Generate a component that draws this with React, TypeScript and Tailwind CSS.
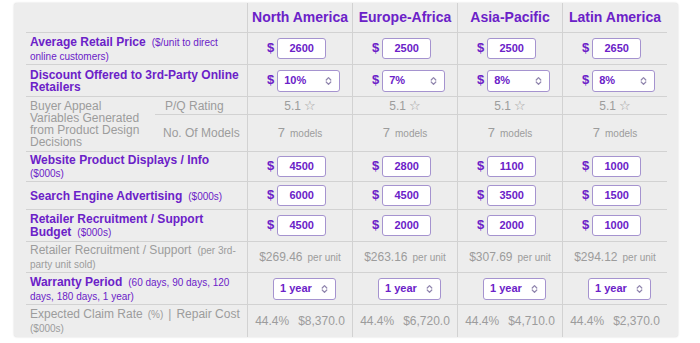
import React from "react";

const PURPLE = "text-[#6b21c8]";
const GRAY = "text-[#9c9c9c]";

type Col = {
  name: string;
  price: string;
  disc: string;
  web: string;
  search: string;
  budget: string;
  per: string;
  claim: string;
  cost: string;
};

const cols: Col[] = [
  { name: "North America", price: "2600", disc: "10%", web: "4500", search: "6000", budget: "4500", per: "$269.46", claim: "44.4%", cost: "$8,370.0" },
  { name: "Europe-Africa", price: "2500", disc: "7%", web: "2800", search: "4500", budget: "2000", per: "$263.16", claim: "44.4%", cost: "$6,720.0" },
  { name: "Asia-Pacific", price: "2500", disc: "8%", web: "1100", search: "3500", budget: "2000", per: "$307.69", claim: "44.4%", cost: "$4,710.0" },
  { name: "Latin America", price: "2650", disc: "8%", web: "1000", search: "1500", budget: "1000", per: "$294.12", claim: "44.4%", cost: "$2,370.0" },
];

function Chevrons() {
  return (
    <svg width="7" height="10" viewBox="0 0 7 10" fill="none">
      <path d="M1.2 4 L3.5 1.6 L5.8 4" stroke="#8f84ad" strokeWidth="1.2" strokeLinecap="round" strokeLinejoin="round" />
      <path d="M1.2 6 L3.5 8.4 L5.8 6" stroke="#8f84ad" strokeWidth="1.2" strokeLinecap="round" strokeLinejoin="round" />
    </svg>
  );
}

function Dollar() {
  return <span className={`text-[13px] font-bold leading-none mb-[2px] ${PURPLE}`}>$</span>;
}

function InputBox({ v }: { v: string }) {
  return (
    <div className={`w-[49px] h-[21px] border border-[#a593cf] rounded-[3px] bg-white flex items-center justify-center text-[11px] font-bold ${PURPLE}`}>
      {v}
    </div>
  );
}

function SelectBox({ v }: { v: string }) {
  return (
    <div className={`w-[63px] h-[22px] border border-[#a593cf] rounded-[3px] bg-white flex items-center justify-between pl-[6px] pr-[7px] text-[11px] font-bold ${PURPLE}`}>
      <span>{v}</span>
      <Chevrons />
    </div>
  );
}

const dataCell = "border-l border-b border-[#d2d2d2]";
const labelCell = "col-span-2 border-b border-[#d2d2d2] flex items-center pl-[4px] leading-[12px]";

function Small({ children, className = "" }: { children: React.ReactNode; className?: string }) {
  return <span className={`text-[10px] font-normal ${className}`}>{children}</span>;
}

export default function App() {
  return (
    <div className="w-[700px] h-[343px] bg-white pl-[14px] pt-[3px]" style={{ fontFamily: '"Liberation Sans", Arial, sans-serif' }}>
      <div className="w-[664px] h-[334px] bg-[#ededed] rounded-[3px] shadow-[0_0_2px_rgba(0,0,0,0.18)] pl-[12px] pr-[11px]">
        <div className="grid grid-cols-[129px_92px_105px_105px_105px_105px] grid-rows-[30px_32px_32px_18px_37px_30px_28px_32px_31px_32px_32px]">
          {/* header */}
          <div className="col-span-2 border-b border-[#d2d2d2]" />
          {cols.map((c) => (
            <div key={c.name} className={`${dataCell} flex items-center justify-center text-[14px] font-bold ${PURPLE}`}>
              {c.name}
            </div>
          ))}

          {/* average retail price */}
          <div className={`${labelCell} ${PURPLE}`}>
            <div>
              <span className="text-[12px] font-bold">Average Retail Price</span>
              <Small className="ml-[6px]">($/unit to direct</Small>
              <br />
              <Small>online customers)</Small>
            </div>
          </div>
          {cols.map((c) => (
            <div key={c.name} className={`${dataCell} flex items-center pl-[19px] gap-[3px]`}>
              <Dollar />
              <InputBox v={c.price} />
            </div>
          ))}

          {/* discount */}
          <div className={`${labelCell} ${PURPLE}`}>
            <div className="text-[12px] font-bold">
              Discount Offered to 3rd-Party Online
              <br />
              Retailers
            </div>
          </div>
          {cols.map((c) => (
            <div key={c.name} className={`${dataCell} flex items-center pl-[19px] gap-[3px]`}>
              <Dollar />
              <SelectBox v={c.disc} />
            </div>
          ))}

          {/* buyer appeal */}
          <div className={`row-span-2 border-b border-[#d2d2d2] flex items-center pl-[4px] text-[12px] leading-[12px] ${GRAY}`}>
            <div>
              Buyer Appeal
              <br />
              Variables Generated
              <br />
              from Product Design
              <br />
              Decisions
            </div>
          </div>
          <div className={`border-b border-[#d2d2d2] flex items-center pl-[10px] text-[12px] ${GRAY}`}>P/Q Rating</div>
          {cols.map((c) => (
            <div key={c.name} className={`${dataCell} flex items-center justify-center text-[12px] ${GRAY}`}>
              <span>5.1</span>
              <span className="ml-[3px] text-[13px] leading-none" style={{ fontFamily: '"DejaVu Sans", sans-serif' }}>☆</span>
            </div>
          ))}
          <div className={`border-b border-[#d2d2d2] flex items-center pl-[8px] text-[12px] ${GRAY}`}>No. Of Models</div>
          {cols.map((c) => (
            <div key={c.name} className={`${dataCell} flex items-center justify-center ${GRAY}`}>
              <span className="text-[13px]">7</span>
              <span className="text-[10px] ml-[5px]">models</span>
            </div>
          ))}

          {/* website */}
          <div className={`${labelCell} ${PURPLE}`}>
            <div>
              <span className="text-[12px] font-bold">Website Product Displays / Info</span>
              <br />
              <Small>($000s)</Small>
            </div>
          </div>
          {cols.map((c) => (
            <div key={c.name} className={`${dataCell} flex items-center pl-[19px] gap-[3px]`}>
              <Dollar />
              <InputBox v={c.web} />
            </div>
          ))}

          {/* search */}
          <div className={`${labelCell} ${PURPLE}`}>
            <div>
              <span className="text-[12px] font-bold">Search Engine Advertising</span>
              <Small className="ml-[6px]">($000s)</Small>
            </div>
          </div>
          {cols.map((c) => (
            <div key={c.name} className={`${dataCell} flex items-center pl-[19px] gap-[3px]`}>
              <Dollar />
              <InputBox v={c.search} />
            </div>
          ))}

          {/* retailer budget */}
          <div className={`${labelCell} ${PURPLE}`}>
            <div>
              <span className="text-[12px] font-bold">Retailer Recruitment / Support</span>
              <br />
              <span className="text-[12px] font-bold">Budget</span>
              <Small className="ml-[6px]">($000s)</Small>
            </div>
          </div>
          {cols.map((c) => (
            <div key={c.name} className={`${dataCell} flex items-center pl-[19px] gap-[3px]`}>
              <Dollar />
              <InputBox v={c.budget} />
            </div>
          ))}

          {/* retailer per unit */}
          <div className={`${labelCell} ${GRAY}`}>
            <div>
              <span className="text-[12px]">Retailer Recruitment / Support</span>
              <Small className="ml-[6px]">(per 3rd-</Small>
              <br />
              <Small>party unit sold)</Small>
            </div>
          </div>
          {cols.map((c) => (
            <div key={c.name} className={`${dataCell} flex items-center justify-center ${GRAY}`}>
              <span className="text-[12px]">{c.per}</span>
              <span className="text-[10px] ml-[5px]">per unit</span>
            </div>
          ))}

          {/* warranty */}
          <div className={`${labelCell} ${PURPLE}`}>
            <div>
              <span className="text-[12px] font-bold">Warranty Period</span>
              <Small className="ml-[6px]">(60 days, 90 days, 120</Small>
              <br />
              <Small>days, 180 days, 1 year)</Small>
            </div>
          </div>
          {cols.map((c) => (
            <div key={c.name} className={`${dataCell} flex items-center pl-[25px]`}>
              <SelectBox v="1 year" />
            </div>
          ))}

          {/* expected claim */}
          <div className={`col-span-2 flex items-center pl-[4px] leading-[12px] ${GRAY}`}>
            <div>
              <span className="text-[12px]">Expected Claim Rate</span>
              <Small className="ml-[5px]">(%)</Small>
              <span className="text-[12px] mx-[5px]">|</span>
              <span className="text-[12px]">Repair Cost</span>
              <br />
              <Small>($000s)</Small>
            </div>
          </div>
          {cols.map((c) => (
            <div key={c.name} className={`border-l border-[#d2d2d2] flex items-center justify-center text-[12px] ${GRAY}`}>
              <span>{c.claim}</span>
              <span className="ml-[9px]">{c.cost}</span>
            </div>
          ))}
        </div>
      </div>
    </div>
  );
}
